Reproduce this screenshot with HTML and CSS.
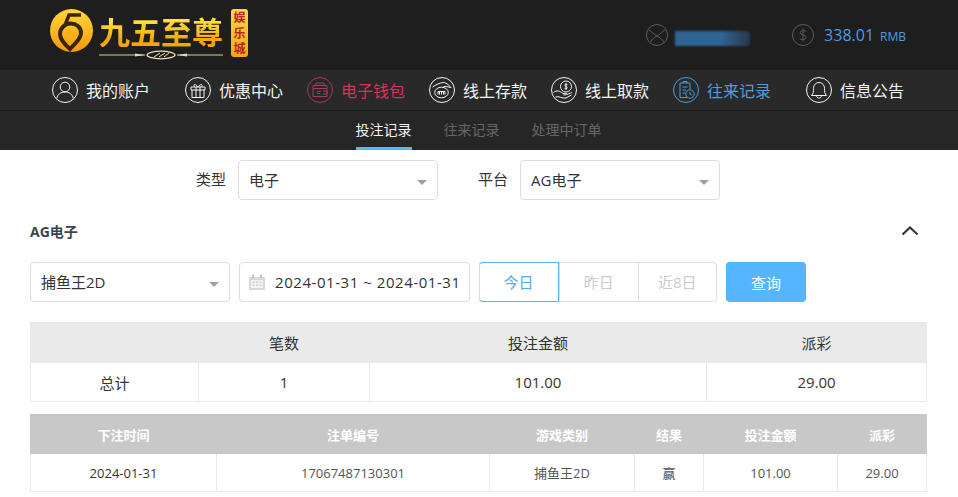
FILE: index.html
```html
<!DOCTYPE html>
<html lang="zh-CN">

<head>
    <meta charset="UTF-8">
    <meta name="viewport" content="width=device-width, initial-scale=1.0">
    <title>往来记录</title>
    <link rel="stylesheet" href="styles.css">
</head>

<body>
    <header class="topbar">
        <div class="logo">
            <svg class="logo-mark" viewBox="0 0 43 43">
                <defs>
                    <linearGradient id="logoGold" x1="0" y1="0" x2="0" y2="1">
                        <stop offset="0" stop-color="#ffd83a" />
                        <stop offset="1" stop-color="#f79a05" />
                    </linearGradient>
                </defs>
                <circle cx="21.5" cy="21.5" r="21.5" fill="url(#logoGold)" />
                <path d="M31 6H19L15.500 15" fill="none" stroke="#3a2406" stroke-width="3.500" />
                <path d="M20 40C23 36 31 31 31 24C31 18 26 14.500 21 14.500C15 14.500 10 19 10 25C10 30 13 34 20 40Z" fill="none" stroke="#3a2406" stroke-width="4" />
                <circle cx="20.500" cy="25" r="4.500" fill="#f9b114" />
            </svg>
            <div class="logo-title">
                <span class="logo-title__text">九五至尊</span>
                <svg class="logo-title__line" viewBox="0 0 124 10">
                    <path d="M0 5H46M78 5H124" stroke="#d9cf9f" stroke-width="1" />
                    <path d="M36 3.500L46 5L36 6.500M88 3.500L78 5L88 6.500" fill="#e6dba8" />
                    <ellipse cx="62" cy="5" rx="14" ry="3.800" fill="none" stroke="#eee3b2" stroke-width="1.200" />
                    <path d="M55 7L61 3M60 7L66 3M65 7L70 3" stroke="#eee3b2" stroke-width="1" />
                </svg>
            </div>
            <span class="logo-badge">娱乐城</span>
        </div>

        <div class="account">
            <div class="account-user">
                <svg class="account-icon" viewBox="0 0 22 22">
                    <circle cx="11" cy="11" r="10.500" />
                    <path d="M3 6C6 8 7 9.500 11 12C8 13.500 6 15 4.500 18M19 6C16 8 15 9.500 11 12C14 13.500 16 15 17.500 18" />
                </svg>
                <span class="account-mask"></span>
            </div>
            <div class="account-balance">
                <svg class="account-icon" viewBox="0 0 22 22">
                    <circle cx="11" cy="11" r="10.500" />
                    <path d="M14 7.500C13 6.300 9 6 8.300 8.200C7.500 11 14.500 10.500 14 13.700C13.500 16 9 16 7.800 14.500M11 4.500V17.500" />
                </svg>
                <span class="account-balance__value">338.01</span>
                <span class="account-balance__unit">RMB</span>
            </div>
        </div>
    </header>

    <nav class="mainnav">
        <a class="mainnav-item mainnav-item--wide">
            <svg class="mainnav-item__icon" viewBox="0 0 26 26">
                <circle cx="13" cy="13" r="12.500" />
                <circle cx="13" cy="10" r="4.800" />
                <path d="M4.800 21.500C5.500 17 9 15 13 15C17 15 20.500 17 21.200 21.500" />
            </svg>
            <span>我的账户</span>
        </a>
        <a class="mainnav-item">
            <svg class="mainnav-item__icon" viewBox="0 0 26 26">
                <circle cx="13" cy="13" r="12.500" />
                <path d="M6 10H20V13H6ZM7 13V20.500H19V13M11 10V20.500M15 10V20.500M9.500 10C8 7.500 10 6 13 10C16 6 18 7.500 16.500 10" />
            </svg>
            <span>优惠中心</span>
        </a>
        <a class="mainnav-item mainnav-item--wallet">
            <svg class="mainnav-item__icon" viewBox="0 0 26 26">
                <circle cx="13" cy="13" r="12.500" />
                <path d="M6 8.500H20V19.500H6ZM6 11.500H20M9 8.500V6H17V8.500M16 14H20V17H16M10 14.500H14M10 16.500H13" />
            </svg>
            <span>电子钱包</span>
        </a>
        <a class="mainnav-item">
            <svg class="mainnav-item__icon" viewBox="0 0 26 26">
                <circle cx="13" cy="13" r="12.500" />
                <path d="M3.500 10C7 7.500 11 6 14 5.500C16 5 20 8 22 10.500C19 10 16.500 9 14.500 9.500" />
                <ellipse cx="12.500" cy="15.500" rx="6.800" ry="5.300" />
                <path d="M9 17.500V14.500H16V17.500M10.500 14.500V17.500M12.500 14.500V17.500M14.500 14.500V17.500" />
            </svg>
            <span>线上存款</span>
        </a>
        <a class="mainnav-item">
            <svg class="mainnav-item__icon" viewBox="0 0 26 26">
                <circle cx="13" cy="13" r="12.500" />
                <circle cx="15" cy="9.500" r="5.500" />
                <path d="M16.500 7.800C16 7 14 7 13.800 8.300C13.700 9.800 16.400 9.300 16.200 11C16 12 14 12 13.500 11.200M15 6V13M2.500 15.500C6 13 8 13.500 12 16.500H15.500C16.500 17.500 15 18 12.500 18M16 17.500L21 15.500M4.500 20C8 18.500 11 22 15 21L20.500 18" />
            </svg>
            <span>线上取款</span>
        </a>
        <a class="mainnav-item mainnav-item--wide mainnav-item--active">
            <svg class="mainnav-item__icon" viewBox="0 0 26 26">
                <circle cx="13" cy="13" r="12.500" />
                <path d="M14 20.500H7V6H17V12M10 6V4.500H14V6M9.500 10H14.500M9.500 13H13M9.500 16H12" />
                <circle cx="17" cy="17" r="4.200" />
                <path d="M17 14.800V17.200L18.800 18" />
            </svg>
            <span>往来记录</span>
        </a>
        <a class="mainnav-item">
            <svg class="mainnav-item__icon" viewBox="0 0 26 26">
                <circle cx="13" cy="13" r="12.500" />
                <path d="M5.500 18.500C7.500 16.500 7.500 14.500 7.500 11.500C7.500 8 10 5.500 13 5.500C16 5.500 18.500 8 18.500 11.500C18.500 14.500 18.500 16.500 20.500 18.500ZM10.500 18.500C10.500 22 15.500 22 15.500 18.500" />
            </svg>
            <span>信息公告</span>
        </a>
    </nav>

    <div class="subnav">
        <a class="subnav-item subnav-item--active">投注记录</a>
        <a class="subnav-item">往来记录</a>
        <a class="subnav-item">处理中订单</a>
    </div>

    <main class="content">
        <div class="filter-row">
            <label class="filter-label">类型</label>
            <div class="select select--type">电子</div>
            <label class="filter-label filter-label--second">平台</label>
            <div class="select select--type">AG电子</div>
        </div>

        <div class="section-title">
            <span>AG电子</span>
            <svg class="section-title__arrow" viewBox="0 0 18 11">
                <path d="M1.500 9.500L9 2.500L16.500 9.500" />
            </svg>
        </div>

        <div class="query-row">
            <div class="select select--game">捕鱼王2D</div>
            <div class="date-range">
                <svg class="date-range__icon" viewBox="0 0 16 16">
                    <path d="M0 3H16V16H0Z" fill="#d8d8d8" />
                    <path d="M3 0.500H5V4H3ZM11 0.500H13V4H11Z" fill="#c4c4c4" />
                    <path d="M2 6H14V14H2Z" fill="#f2f2f2" />
                    <path d="M3.500 7.500H5.500V9H3.500ZM7 7.500H9V9H7ZM10.500 7.500H12.500V9H10.500ZM3.500 10.500H5.500V12H3.500ZM7 10.500H9V12H7ZM10.500 10.500H12.500V12H10.500Z" fill="#cfcfcf" />
                </svg>
                <span>2024-01-31 ~ 2024-01-31</span>
            </div>
            <div class="day-group">
                <a class="day-group__item day-group__item--active">今日</a>
                <a class="day-group__item">昨日</a>
                <a class="day-group__item">近8日</a>
            </div>
            <button class="query-btn">查询</button>
        </div>

        <table class="summary-table">
            <colgroup>
                <col class="col-s1">
                <col class="col-s2">
                <col class="col-s3">
                <col class="col-s4">
            </colgroup>
            <thead>
                <tr>
                    <th></th>
                    <th>笔数</th>
                    <th>投注金额</th>
                    <th>派彩</th>
                </tr>
            </thead>
            <tbody>
                <tr>
                    <td>总计</td>
                    <td>1</td>
                    <td>101.00</td>
                    <td>29.00</td>
                </tr>
            </tbody>
        </table>

        <table class="detail-table">
            <colgroup>
                <col class="col-d1">
                <col class="col-d2">
                <col class="col-d3">
                <col class="col-d4">
                <col class="col-d5">
                <col class="col-d6">
            </colgroup>
            <thead>
                <tr>
                    <th>下注时间</th>
                    <th>注单编号</th>
                    <th>游戏类别</th>
                    <th>结果</th>
                    <th>投注金额</th>
                    <th>派彩</th>
                </tr>
            </thead>
            <tbody>
                <tr>
                    <td class="cell-dark">2024-01-31</td>
                    <td>17067487130301</td>
                    <td>捕鱼王2D</td>
                    <td>赢</td>
                    <td>101.00</td>
                    <td>29.00</td>
                </tr>
            </tbody>
        </table>
    </main>
</body>

</html>
```

FILE: styles.css
```css
* {
    box-sizing: border-box;
}

html,
body {
    margin: 0;
    height: 497px;
    overflow: hidden;
}

body {
    background-color: #fff;
    font-family: 'Open Sans', 'Noto Sans CJK SC', sans-serif;
    color: #333;
}

/* top bar */
.topbar {
    display: flex;
    justify-content: space-between;
    align-items: center;
    height: 70px;
    padding: 0 52px 6px 50px;
    background-color: #1e1e1e;
}

.logo {
    display: flex;
    align-items: flex-start;
    height: 48px;
    margin-top: 2px;
}

.logo-mark {
    width: 43px;
    height: 43px;
    margin-right: 6px;
}

.logo-title {
    display: flex;
    flex-direction: column;
    width: 124px;
}

.logo-title__text {
    height: 38px;
    font-family: 'Noto Sans CJK SC', sans-serif;
    font-size: 31px;
    font-weight: 700;
    line-height: 43px;
    white-space: nowrap;
    background: linear-gradient(#ffe23c 30%, #f6a50c 80%);
    -webkit-background-clip: text;
    background-clip: text;
    color: transparent;
}

.logo-title__line {
    width: 124px;
    height: 10px;
    margin-top: 3px;
}

.logo-badge {
    width: 17px;
    height: 48px;
    margin-left: 8px;
    padding-top: 1px;
    border-radius: 3px;
    background: linear-gradient(#ffd94a, #f5a510);
    color: #b3271a;
    font-size: 12px;
    font-weight: 700;
    line-height: 15.500px;
    text-align: center;
}

.account {
    display: flex;
    align-items: center;
    gap: 42px;
    margin-top: 6px;
}

.account-user,
.account-balance {
    display: flex;
    align-items: center;
}

.account-icon {
    width: 22px;
    height: 22px;
    fill: none;
    stroke: #5c5c5c;
    stroke-width: 1;
}

.account-mask {
    width: 75px;
    height: 15px;
    margin: 7px 0 0 7px;
    border-radius: 0 4px 3px 0;
    background: linear-gradient(90deg, #2f6595 0%, #2f6595 60%, #2c4f6d 80%, #243a4d 100%);
    filter: blur(1px);
}

.account-balance__value {
    margin-left: 10px;
    color: #4a9fe0;
    font-size: 16px;
}

.account-balance__unit {
    margin: 2px 0 0 6px;
    color: #4a9fe0;
    font-size: 12px;
}

/* main nav */
.mainnav {
    display: flex;
    align-items: center;
    height: 41px;
    padding-left: 52px;
    border-bottom: 1px solid #161616;
    background-color: #292929;
}

.mainnav-item {
    display: flex;
    align-items: center;
    width: 122px;
    color: #f4f4f4;
    font-size: 16px;
    cursor: pointer;
}

.mainnav-item--wide {
    width: 133px;
}

.mainnav-item__icon {
    flex: none;
    width: 26px;
    height: 26px;
    margin-right: 8px;
    fill: none;
    stroke: currentColor;
    stroke-width: 1;
}

.mainnav-item--wallet {
    color: #d6325a;
}

.mainnav-item--wallet .mainnav-item__icon {
    color: #a83a58;
}

.mainnav-item--active {
    color: #4a9fe0;
}

/* tabs under the nav */
.subnav {
    display: flex;
    justify-content: center;
    gap: 32px;
    height: 39px;
    padding-right: 1px;
    background-color: #262626;
}

.subnav-item {
    height: 39px;
    color: #666;
    font-size: 14px;
    line-height: 38px;
    cursor: pointer;
}

.subnav-item--active {
    border-bottom: 3px solid #55b5f5;
    color: #f4f4f4;
}

/* filters */
.content {
    padding: 10px 32px 0 30px;
}

.filter-row {
    display: flex;
    align-items: center;
    padding-left: 166px;
}

.filter-label {
    margin: -3px 12px 0 0;
    font-size: 15px;
}

.filter-label--second {
    margin-left: 40px;
}

.select {
    position: relative;
    height: 40px;
    padding-left: 10px;
    border: 1px solid #dcdcdc;
    border-radius: 4px;
    background-color: #fff;
    font-size: 15px;
    line-height: 38px;
}

.select::after {
    content: "";
    position: absolute;
    top: 19px;
    right: 10px;
    border-width: 5px 5px 0;
    border-style: solid;
    border-color: #a0a0a0 transparent transparent;
}

.select--type,
.select--game {
    width: 200px;
}

.section-title {
    display: flex;
    justify-content: space-between;
    align-items: center;
    height: 62px;
    padding-right: 7px;
    color: #3c4450;
    font-size: 14px;
    font-weight: 700;
}

.section-title__arrow {
    width: 18px;
    height: 11px;
    margin-top: -2px;
    fill: none;
    stroke: #2f3640;
    stroke-width: 2.200;
}

.query-row {
    display: flex;
}

.date-range {
    display: flex;
    align-items: center;
    width: 231px;
    height: 40px;
    margin-left: 9px;
    padding-left: 9px;
    border: 1px solid #dcdcdc;
    border-radius: 4px;
    font-size: 15px;
    letter-spacing: .55px;
    white-space: nowrap;
}

.date-range__icon {
    flex: none;
    width: 16px;
    height: 16px;
    margin-right: 10px;
}

.day-group {
    display: flex;
    width: 238px;
    height: 40px;
    margin-left: 9px;
    border: 1px solid #dcdcdc;
    border-radius: 4px;
}

.day-group__item {
    flex: 1 1 0;
    border-left: 1px solid #dcdcdc;
    color: #ccc;
    font-size: 15px;
    line-height: 38px;
    text-align: center;
    cursor: pointer;
}

.day-group__item:first-child {
    border-left: 0;
}

.day-group__item--active {
    flex: none;
    width: 80px;
    height: 40px;
    margin: -1px 0 0 -1px;
    border: 1px solid #55b5f5;
    border-radius: 4px 0 0 4px;
    color: #55a9e8;
}

.query-btn {
    width: 80px;
    height: 40px;
    margin-left: 9px;
    padding: 0;
    border: 0;
    border-radius: 4px;
    background-color: #55b5ff;
    color: #fff;
    font-family: inherit;
    font-size: 15px;
}

/* tables */
table {
    width: 896px;
    border-collapse: collapse;
    table-layout: fixed;
    text-align: center;
}

.summary-table {
    margin-top: 20px;
    font-size: 15px;
}

.summary-table th {
    height: 40px;
    border: 1px solid #eaeaea;
    border-left-color: #fff;
    background-color: #eaeaea;
    font-weight: 400;
}

.summary-table th:first-child {
    border-left-color: #eaeaea;
}

.summary-table td {
    height: 39px;
    border: 1px solid #eaeaea;
}

.col-s1 {
    width: 168px;
}

.col-s2 {
    width: 171px;
}

.col-s3 {
    width: 337px;
}

.col-s4 {
    width: 220px;
}

.detail-table {
    margin-top: 12px;
    font-size: 13px;
    color: #555;
}

.detail-table th {
    height: 39px;
    border: 1px solid #c8c8c8;
    border-left-color: #fff;
    background-color: #c8c8c8;
    color: #fff;
    font-weight: 700;
}

.detail-table th:first-child {
    border-left-color: #c8c8c8;
}

.detail-table td {
    height: 38px;
    border: 1px solid #eaeaea;
}

.detail-table .cell-dark {
    color: #333;
}

.col-d1 {
    width: 186px;
}

.col-d2 {
    width: 273px;
}

.col-d3 {
    width: 145px;
}

.col-d4 {
    width: 69px;
}

.col-d5 {
    width: 134px;
}

.col-d6 {
    width: 89px;
}
```
